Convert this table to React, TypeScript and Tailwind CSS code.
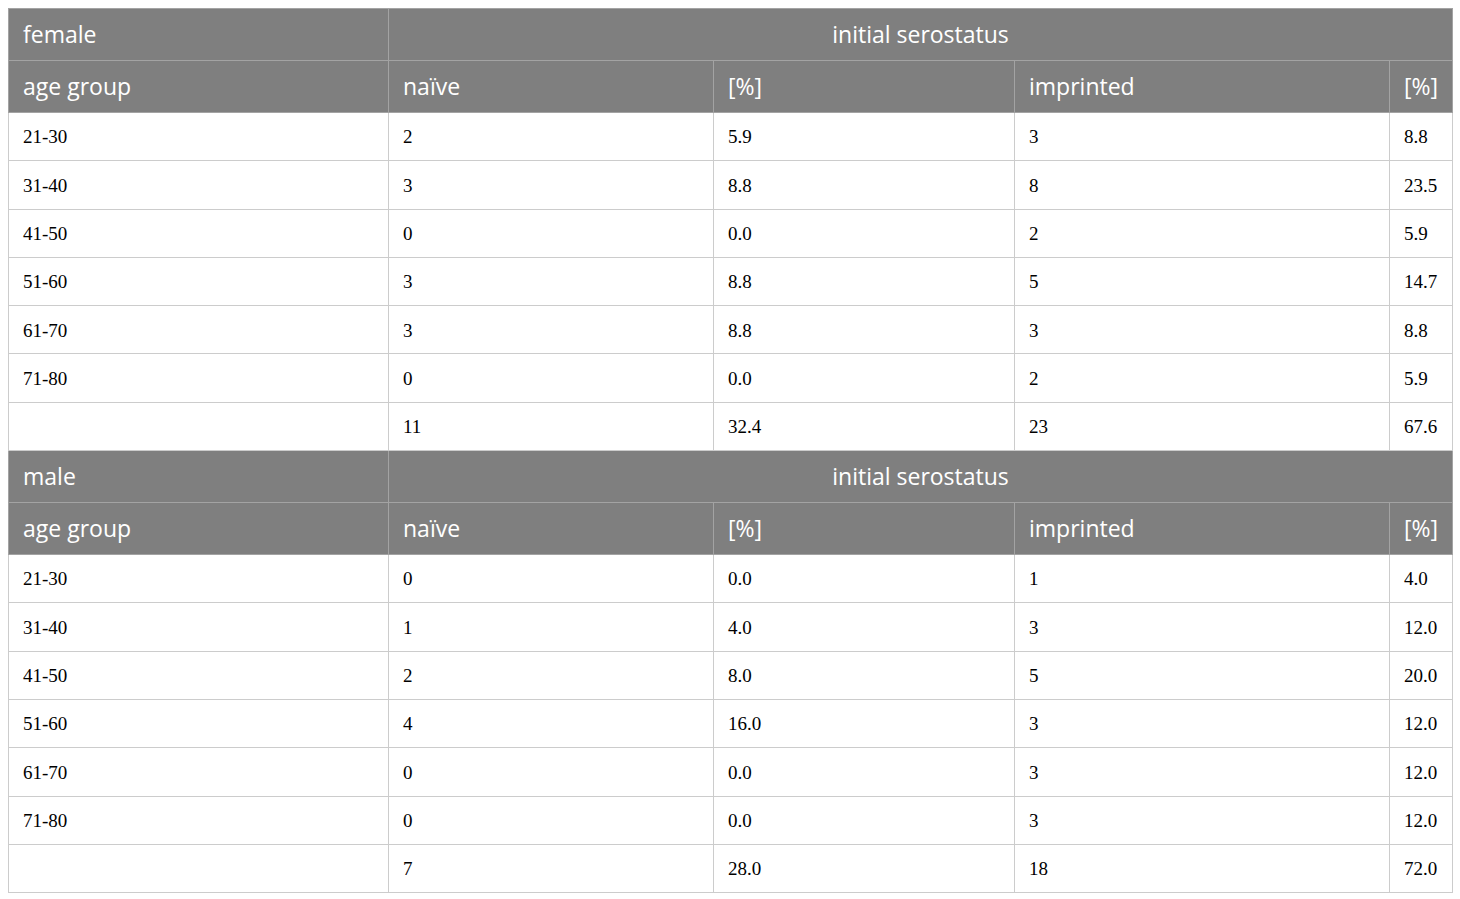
const female = [
  ["21-30", "2", "5.9", "3", "8.8"],
  ["31-40", "3", "8.8", "8", "23.5"],
  ["41-50", "0", "0.0", "2", "5.9"],
  ["51-60", "3", "8.8", "5", "14.7"],
  ["61-70", "3", "8.8", "3", "8.8"],
  ["71-80", "0", "0.0", "2", "5.9"],
  ["", "11", "32.4", "23", "67.6"],
];

const male = [
  ["21-30", "0", "0.0", "1", "4.0"],
  ["31-40", "1", "4.0", "3", "12.0"],
  ["41-50", "2", "8.0", "5", "20.0"],
  ["51-60", "4", "16.0", "3", "12.0"],
  ["61-70", "0", "0.0", "3", "12.0"],
  ["71-80", "0", "0.0", "3", "12.0"],
  ["", "7", "28.0", "18", "72.0"],
];

function Header({ label }: { label: string }) {
  const th =
    "border border-[#a3a3a3] bg-[#7f7f7f] px-[14px] text-left font-normal text-white text-[23px] font-['Open_Sans',sans-serif]";
  return (
    <>
      <tr className="h-[52px]">
        <th className={th}>{label}</th>
        <th colSpan={4} className={th + " !text-center"}>
          initial serostatus
        </th>
      </tr>
      <tr className="h-[52px]">
        <th className={th}>age group</th>
        <th className={th}>naïve</th>
        <th className={th}>[%]</th>
        <th className={th}>imprinted</th>
        <th className={th}>[%]</th>
      </tr>
    </>
  );
}

function Rows({ rows }: { rows: string[][] }) {
  return (
    <>
      {rows.map((r, i) => (
        <tr key={i} className="h-[48.3px]">
          {r.map((c, j) => (
            <td
              key={j}
              className="border border-[#cccccc] px-[14px] pt-[2px] text-[19px] text-black font-['Liberation_Serif',serif]"
            >
              {c}
            </td>
          ))}
        </tr>
      ))}
    </>
  );
}

export default function App() {
  return (
    <main className="min-h-screen bg-white p-[8px]">
      <table className="w-[1444px] table-fixed border-collapse">
        <colgroup>
          <col className="w-[380px]" />
          <col className="w-[325px]" />
          <col className="w-[301px]" />
          <col className="w-[375px]" />
          <col className="w-[63px]" />
        </colgroup>
        <tbody>
          <Header label="female" />
          <Rows rows={female} />
          <Header label="male" />
          <Rows rows={male} />
        </tbody>
      </table>
    </main>
  );
}
